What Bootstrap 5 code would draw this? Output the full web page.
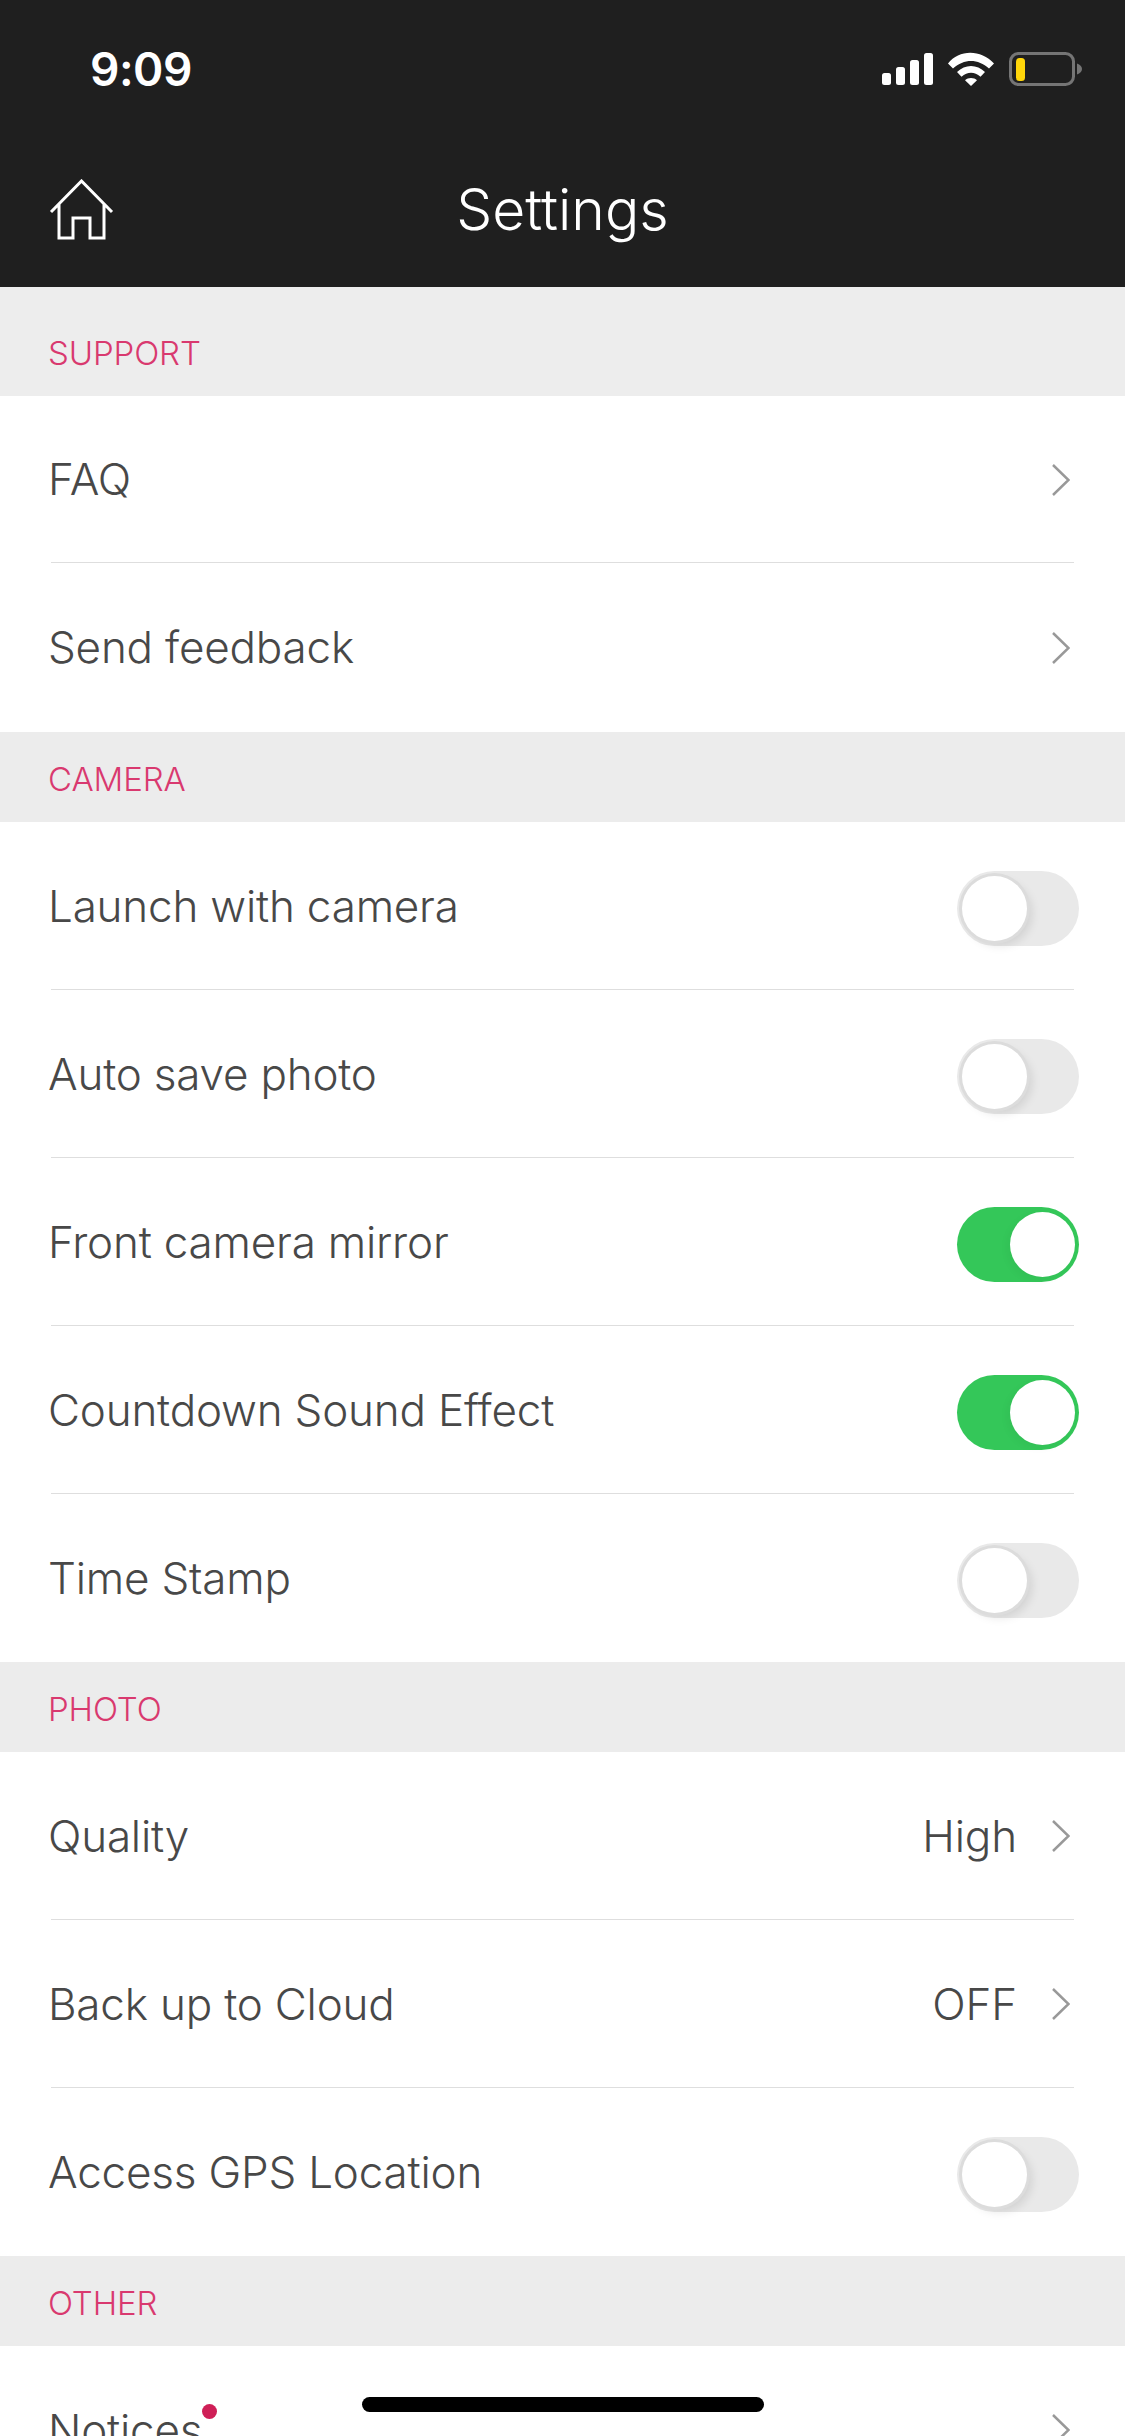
<!DOCTYPE html>
<html lang="en">
<head>
<meta charset="utf-8">
<title>Settings</title>
<link rel="stylesheet" href="https://cdn.jsdelivr.net/npm/bootstrap@5.3.0/dist/css/bootstrap.min.css">
<style>
html,body{height:2436px;overflow:hidden;background:#fff}
body{font-family:Inter,"Liberation Sans",sans-serif;font-weight:300;color:#444}
.app-top{background:#1f1f1f;height:287px;color:#fff}
.status-line{height:120px;padding:45px 40px 0 90px}
.clock{font-weight:600;font-size:46px;line-height:48px;letter-spacing:-.5px}
.stat-icons{margin-top:7px}
.title-line{height:167px;padding-top:12px}
.title-text{font-size:57px;line-height:60px;font-weight:300}
.home-ico{left:49px;top:179px}
.sec-head{background:#ececec;color:#d9396f;font-size:33px;line-height:40px;padding-left:48px;height:90px;padding-top:27px;letter-spacing:-.1px}
.sec-first{height:109px;padding-top:46px;background:#ededed}
.row-item{padding-left:49px}
.row-inner{height:168px;padding-right:51px}
.row-short{height:167px}
.row-tall{height:169px}
.row-label{font-size:44px;line-height:52px;color:#484848;letter-spacing:-.2px;margin-left:-1px;padding-bottom:1px}
.row-sep{height:1px;background:#dedede;width:1023px;margin-left:2px;margin-top:-1px;position:relative}
.val{font-size:44px;line-height:52px;color:#484848;letter-spacing:-.15px;margin-right:35px;padding-bottom:1px}
.chev{margin-right:4px}
.tog{width:122px;height:75px;border-radius:38px;background:#e9e9e9;margin-right:-5px;margin-top:5px}
.tog-on{background:#34c759}
.knob{width:65px;height:65px;border-radius:50%;background:#fff;left:5px;top:5px;box-shadow:0 0 0 3px #dcdcdc,5px 5px 10px rgba(0,0,0,.1)}
.tog-on .knob{left:53px;box-shadow:-3px 3px 8px rgba(0,0,0,.04)}
.dot{width:15px;height:15px;border-radius:50%;background:#cf1f57;left:154px;top:0}
.bar-home{left:362px;top:2397px;width:402px;height:15px;background:#000;border-radius:8px}
</style>
</head>
<body>
<div class="position-relative">
<header class="app-top">
  <div class="status-line d-flex justify-content-between align-items-start">
    <div class="clock">9:09</div>
    <svg class="stat-icons" width="205" height="36" viewBox="0 0 205 36" aria-hidden="true">
      <g fill="#fff">
        <rect x="2" y="21" width="9" height="12" rx="2.5"/>
        <rect x="16" y="15" width="9" height="18" rx="2.5"/>
        <rect x="30" y="8" width="9" height="25" rx="2.5"/>
        <rect x="44" y="1" width="9" height="32" rx="2.5"/>
        <g transform="translate(7 0)">
        <path d="M61 11.500C72 -3 94 -3 107 11.500L102 16.500C91 6.500 77 6.500 66 16.500Z"/>
        <path d="M70 20C78 12 90 12 98 20L93.500 24.800C87.500 19.500 80.500 19.500 74.500 24.800Z"/>
        <path d="M78 28.300C81 25.300 87 25.300 90 28.300L84 34Z"/>
        </g>
      </g>
      <rect x="130.500" y="1.500" width="63" height="31" rx="8" fill="none" stroke="#757575" stroke-width="3"/>
      <rect x="136" y="6" width="9" height="23" rx="3.500" fill="#ffd60a"/>
      <path d="M197 11.500C200 12.500 202 14.500 202 17C202 19.500 200 21.500 197 22.500Z" fill="#757575"/>
    </svg>
  </div>
  <div class="title-line d-flex align-items-center justify-content-center">
    <div class="title-text">Settings</div>
  </div>
</header>
<svg class="home-ico position-absolute" width="66" height="62" viewBox="0 0 66 62" aria-hidden="true"><path d="M2 33L32.500 2L63 33M10 25V59H24V39H41V59H55V25" fill="none" stroke="#fff" stroke-width="3"/></svg>

<main>
  <div class="sec-head sec-first">SUPPORT</div>
  <div class="row-item"><div class="row-inner row-short d-flex align-items-center justify-content-between"><span class="row-label">FAQ</span><svg class="chev" width="18" height="32" viewBox="0 0 18 32" aria-hidden="true"><path d="M1 1L16.500 16L1 31" fill="none" stroke="#999" stroke-width="2.500"/></svg></div><div class="row-sep"></div></div>
  <div class="row-item"><div class="row-inner row-tall d-flex align-items-center justify-content-between"><span class="row-label">Send feedback</span><svg class="chev" width="18" height="32" viewBox="0 0 18 32" aria-hidden="true"><path d="M1 1L16.500 16L1 31" fill="none" stroke="#999" stroke-width="2.500"/></svg></div></div>

  <div class="sec-head">CAMERA</div>
  <div class="row-item"><div class="row-inner d-flex align-items-center justify-content-between"><span class="row-label">Launch with camera</span><div class="tog position-relative"><div class="knob position-absolute"></div></div></div><div class="row-sep"></div></div>
  <div class="row-item"><div class="row-inner d-flex align-items-center justify-content-between"><span class="row-label">Auto save photo</span><div class="tog position-relative"><div class="knob position-absolute"></div></div></div><div class="row-sep"></div></div>
  <div class="row-item"><div class="row-inner d-flex align-items-center justify-content-between"><span class="row-label">Front camera mirror</span><div class="tog tog-on position-relative"><div class="knob position-absolute"></div></div></div><div class="row-sep"></div></div>
  <div class="row-item"><div class="row-inner d-flex align-items-center justify-content-between"><span class="row-label">Countdown Sound Effect</span><div class="tog tog-on position-relative"><div class="knob position-absolute"></div></div></div><div class="row-sep"></div></div>
  <div class="row-item"><div class="row-inner d-flex align-items-center justify-content-between"><span class="row-label">Time Stamp</span><div class="tog position-relative"><div class="knob position-absolute"></div></div></div></div>

  <div class="sec-head">PHOTO</div>
  <div class="row-item"><div class="row-inner d-flex align-items-center"><span class="row-label me-auto">Quality</span><span class="val">High</span><svg class="chev" width="18" height="32" viewBox="0 0 18 32" aria-hidden="true"><path d="M1 1L16.500 16L1 31" fill="none" stroke="#999" stroke-width="2.500"/></svg></div><div class="row-sep"></div></div>
  <div class="row-item"><div class="row-inner d-flex align-items-center"><span class="row-label me-auto">Back up to Cloud</span><span class="val">OFF</span><svg class="chev" width="18" height="32" viewBox="0 0 18 32" aria-hidden="true"><path d="M1 1L16.500 16L1 31" fill="none" stroke="#999" stroke-width="2.500"/></svg></div><div class="row-sep"></div></div>
  <div class="row-item"><div class="row-inner d-flex align-items-center justify-content-between"><span class="row-label">Access GPS Location</span><div class="tog position-relative"><div class="knob position-absolute"></div></div></div></div>

  <div class="sec-head">OTHER</div>
  <div class="row-item"><div class="row-inner d-flex align-items-center justify-content-between"><span class="row-label position-relative">Notices<span class="dot position-absolute"></span></span><svg class="chev" width="18" height="32" viewBox="0 0 18 32" aria-hidden="true"><path d="M1 1L16.500 16L1 31" fill="none" stroke="#999" stroke-width="2.500"/></svg></div></div>
</main>
<div class="bar-home position-absolute"></div>
</div>
<script src="https://cdn.jsdelivr.net/npm/bootstrap@5.3.0/dist/js/bootstrap.bundle.min.js"></script>
</body>
</html>
